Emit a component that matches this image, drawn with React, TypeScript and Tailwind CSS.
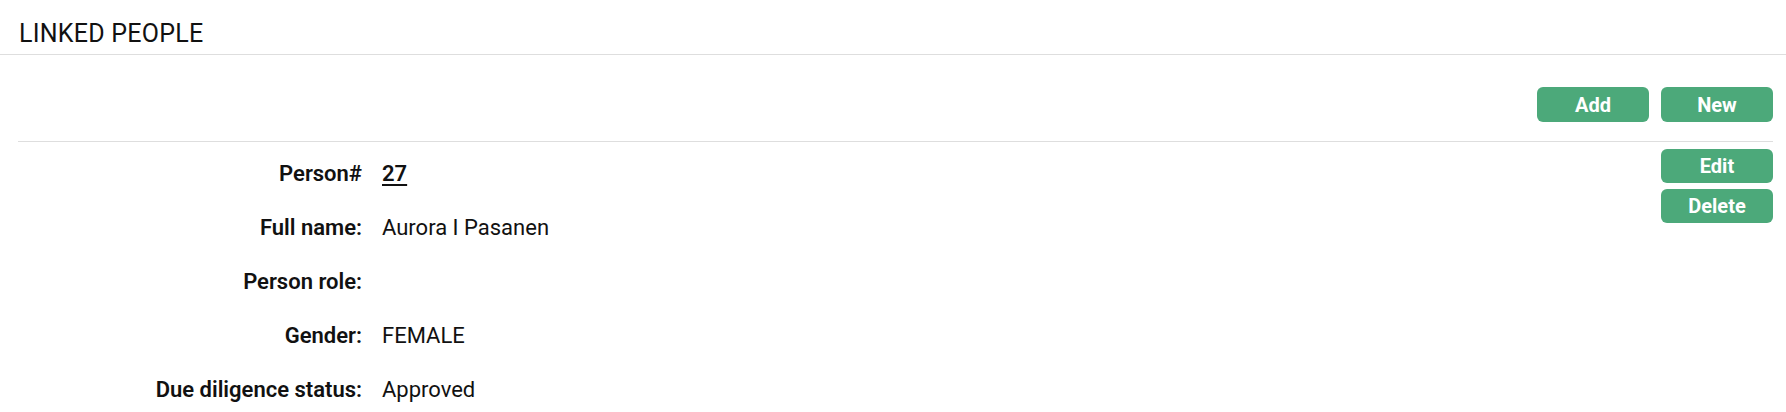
const font = { fontFamily: "Roboto, 'Noto Sans', sans-serif" };

type Field = { label: string; value?: string; link?: boolean };

const fields: Field[] = [
  { label: "Person#", value: "27", link: true },
  { label: "Full name:", value: "Aurora I Pasanen" },
  { label: "Person role:" },
  { label: "Gender:", value: "FEMALE" },
  { label: "Due diligence status:", value: "Approved" },
];

function GreenButton({ children, tall }: { children: string; tall?: boolean }) {
  return (
    <button
      type="button"
      className={
        "w-[112px] rounded-[6px] bg-[#4ca97a] text-[20px] font-bold text-white leading-none " +
        (tall ? "h-[35px]" : "h-[34px]")
      }
    >
      {children}
    </button>
  );
}

export default function App() {
  return (
    <div className="min-h-screen w-full bg-white text-[#111]" style={font}>
      <div className="border-b border-[#dedede] pl-[19px] pt-[19px] pb-[5px]">
        <h1 className="text-[25px] font-normal leading-[30px] tracking-[0.01em]">LINKED PEOPLE</h1>
      </div>

      <div className="pl-[18px] pr-[13px]">
        <div className="mt-[32px] flex justify-end gap-[12px] border-b border-[#dedede] pb-[19px]">
          <GreenButton tall>Add</GreenButton>
          <GreenButton tall>New</GreenButton>
        </div>

        <div className="flex">
          <dl className="flex-1 pt-[5px]">
            {fields.map((f) => (
              <div key={f.label} className="flex h-[54px] items-center text-[22px] leading-[54px]">
                <dt className="w-[344px] text-right font-semibold">{f.label}</dt>
                <dd className="ml-[20px]">
                  {f.link ? (
                    <a className="font-semibold underline underline-offset-[3px]">{f.value}</a>
                  ) : (
                    f.value
                  )}
                </dd>
              </div>
            ))}
          </dl>
          <div className="flex flex-col gap-[6px] pt-[7px]">
            <GreenButton>Edit</GreenButton>
            <GreenButton>Delete</GreenButton>
          </div>
        </div>
      </div>
    </div>
  );
}
